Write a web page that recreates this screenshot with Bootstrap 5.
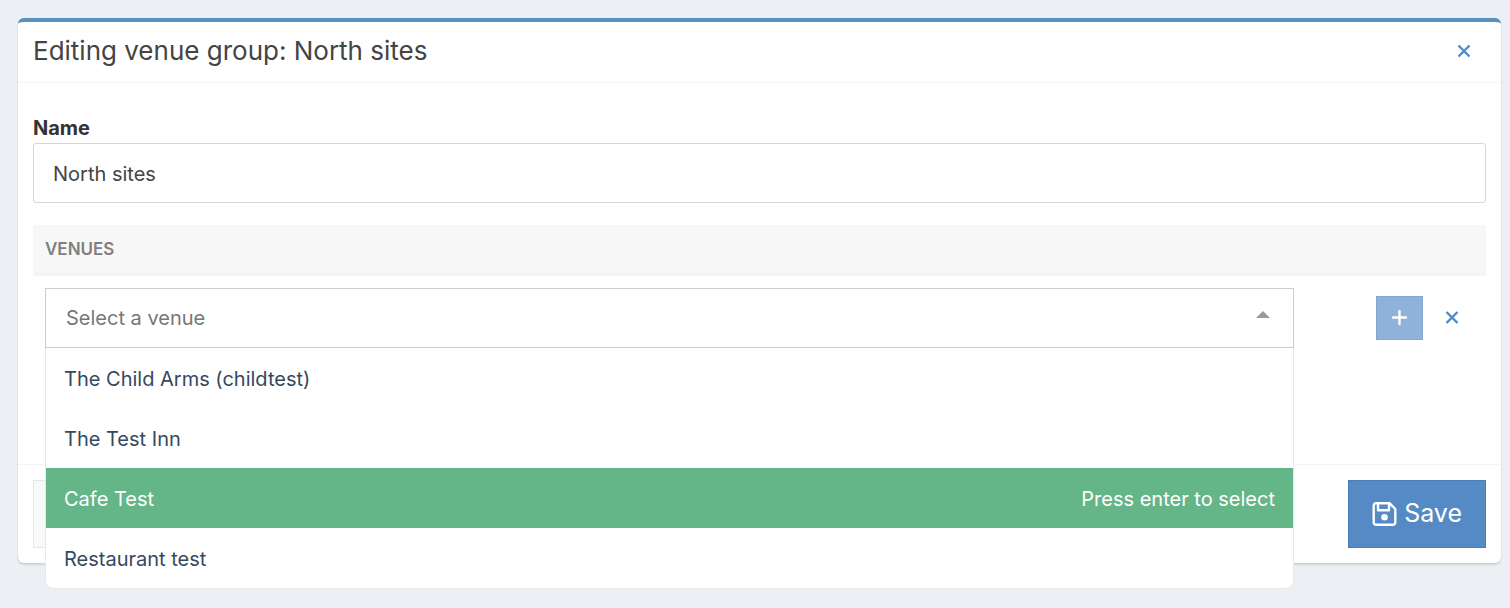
<!DOCTYPE html>
<html lang="en">
<head>
<meta charset="utf-8">
<meta name="viewport" content="width=device-width, initial-scale=1">
<title>Editing venue group: North sites</title>
<link href="https://cdn.jsdelivr.net/npm/bootstrap@5.3.0/dist/css/bootstrap.min.css" rel="stylesheet">
<style>
  body { background: #ecf0f5; color: #333; font-family: Inter, "Liberation Sans", sans-serif; font-size: 20px; line-height: 30px; padding: 18px 9px 18px 18px; }
  .panel { --bs-card-border-width: 0; border-top: 4px solid #5590be; border-radius: 6px; box-shadow: 0 2px 2px rgba(0,0,0,.12), 0 0 1px rgba(0,0,0,.12); }
  .panel-head { padding: 0 15px 2px; height: 61px; border-bottom: 1px solid #f4f4f4; }
  .panel-head h1 { font-size: 26px; line-height: 34px; font-weight: 400; color: #444; }
  .panel-main { padding: 31px 15px 104px; }
  .panel-main label { line-height: 29px; }
  .panel-foot { padding: 15px; border-top: 1px solid #f4f4f4; }
  .panel .form-control { height: 60px; font-size: 20px; line-height: 30px; padding: 1px 19px 0; border-color: #d2d6de; border-radius: 3px; color: #444; box-shadow: none; }
  .venues { margin-top: 22px; }
  .venues-head { background: #f7f7f7; border-bottom: 3px solid #f4f4f4; padding: 9px 12px; color: #808080; }
  .venues-head h2 { font-size: 17px; font-weight: 600; line-height: 30px; text-transform: uppercase; }
  .venue-row { padding: 12px; }
  .venue-row .form-control { border-color: #ccc; border-radius: 0; padding: 0 20px; }
  .venue-row .form-control::placeholder { color: #777; opacity: 1; }
  .caret-up { right: 24px; width: 14px; height: 8px; top: 22px; }
  .options { top: 100%; z-index: 10; background: #fff; border: 1px solid #e8e8e8; border-top: 0; border-radius: 0 0 8px 8px; overflow: hidden; }
  .options button { height: 60px; border: 0; background: none; color: #35495e; padding: 2px 18px 0; }
  .options .chosen { background: #64b587; color: #fff; }
  .row-actions { width: 180px; gap: 7px; }
  .btn { --bs-btn-border-radius: 0; --bs-btn-color: #5089c6; padding: 0; }
  .btn-x { width: 44px; height: 44px; }
  .btn-add { width: 47px; height: 44px; background: #90b1d9; border-color: #82a8d2; }
  .btn-save { height: 68px; padding: 0 23px; gap: 7px; background: #558ac5; border-color: #4a7ebb; font-size: 25px; color: #fff; }
  .btn-cancel { width: 138px; height: 68px; background: #f9f9f9; border-color: #e7e7e7; }
  .btn svg { display: block; }
</style>
</head>
<body class="min-vh-100">
<form class="card panel">
  <div class="panel-head d-flex align-items-center justify-content-between">
    <h1 class="m-0">Editing venue group: North sites</h1>
    <button type="button" class="btn btn-x d-flex align-items-center justify-content-center" aria-label="Close">
      <svg width="14" height="14" viewBox="0 0 14 14" fill="none" stroke="currentColor" stroke-width="2.400"><path d="M1.500 1.500l11 11M12.500 1.500l-11 11"/></svg>
    </button>
  </div>
  <div class="panel-main">
    <label for="group-name" class="d-block fw-bold">Name</label>
    <input id="group-name" class="form-control" type="text" value="North sites">
    <section class="venues">
      <div class="venues-head"><h2 class="m-0">Venues</h2></div>
      <div class="venue-row d-flex align-items-center">
        <div class="position-relative flex-grow-1">
          <input class="form-control" type="text" role="combobox" aria-label="Venue" aria-expanded="true" aria-controls="venue-options" placeholder="Select a venue">
          <svg class="caret-up position-absolute" viewBox="0 0 14 8" fill="#999"><path d="M0 8L7 1l7 7z"/></svg>
          <div id="venue-options" class="options position-absolute start-0 w-100" role="listbox" aria-label="Venues">
            <button type="button" role="option" class="d-flex w-100 align-items-center">The Child Arms (childtest)</button>
            <button type="button" role="option" class="d-flex w-100 align-items-center">The Test Inn</button>
            <button type="button" role="option" aria-selected="true" class="chosen d-flex w-100 align-items-center justify-content-between"><span>Cafe Test</span><span>Press enter to select</span></button>
            <button type="button" role="option" class="d-flex w-100 align-items-center">Restaurant test</button>
          </div>
        </div>
        <div class="row-actions d-flex justify-content-end">
          <button type="button" class="btn btn-add d-flex align-items-center justify-content-center" aria-label="Add venue">
            <svg width="16" height="16" viewBox="0 0 16 16" fill="none" stroke="#fff" stroke-width="2.400" stroke-linecap="round"><path d="M7.500 1v13M1 7.500h13"/></svg>
          </button>
          <button type="button" class="btn btn-x d-flex align-items-center justify-content-center" aria-label="Remove venue">
            <svg width="14" height="14" viewBox="0 0 14 14" fill="none" stroke="currentColor" stroke-width="2.400"><path d="M1.500 1l11 11M12.500 1l-11 11"/></svg>
          </button>
        </div>
      </div>
    </section>
  </div>
  <div class="panel-foot d-flex justify-content-between">
    <button type="button" class="btn btn-cancel" aria-label="Cancel"></button>
    <button type="submit" class="btn btn-save d-flex align-items-center">
      <svg width="25" height="25" viewBox="0 0 25 25" fill="none" stroke="#fff" stroke-width="2.400" stroke-linejoin="round"><path d="M4 1.200h13.500l5.800 5.800V20.500a2.300 2.300 0 0 1-2.300 2.300H4A2.300 2.300 0 0 1 1.700 20.500V3.500A2.300 2.300 0 0 1 4 1.200z"/><path d="M6 1.200v7h11v-7"/><circle cx="12.500" cy="15.200" r="3.300" fill="#fff" stroke="none"/></svg>
      Save
    </button>
  </div>
</form>
<script src="https://cdn.jsdelivr.net/npm/bootstrap@5.3.0/dist/js/bootstrap.bundle.min.js"></script>
</body>
</html>
